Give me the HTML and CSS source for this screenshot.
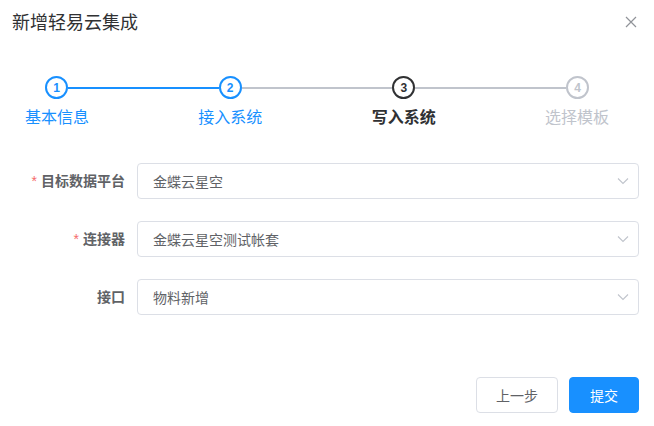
FILE: index.html
```html
<!DOCTYPE html>
<html lang="zh-CN">
<head>
<meta charset="utf-8">
<title>新增轻易云集成</title>
<link rel="stylesheet" href="styles.css">
</head>
<body>
<div class="dialog">
  <div class="header">
    <span class="title">新增轻易云集成</span>
    <svg class="close" width="12" height="12" viewBox="0 0 12 12"><path d="M1 1 L11 11 M11 1 L1 11" stroke="#909399" stroke-width="1.2" fill="none"/></svg>
  </div>

  <div class="steps">
    <div class="steps-head">
      <span class="circle done">1</span>
      <span class="line done"></span>
      <span class="circle done">2</span>
      <span class="line"></span>
      <span class="circle process">3</span>
      <span class="line"></span>
      <span class="circle wait">4</span>
    </div>
    <div class="steps-labels">
      <span class="label done">基本信息</span>
      <span class="label done">接入系统</span>
      <span class="label process">写入系统</span>
      <span class="label wait">选择模板</span>
    </div>
  </div>

  <div class="form">
    <div class="row">
      <label class="form-label"><span class="req">*</span>目标数据平台</label>
      <div class="select"><span>金蝶云星空</span><svg width="12" height="8" viewBox="0 0 12 8"><path d="M1 1.5 L6 6.5 L11 1.5" stroke="#c0c4cc" stroke-width="1.1" fill="none"/></svg></div>
    </div>
    <div class="row">
      <label class="form-label"><span class="req">*</span>连接器</label>
      <div class="select"><span>金蝶云星空测试帐套</span><svg width="12" height="8" viewBox="0 0 12 8"><path d="M1 1.5 L6 6.5 L11 1.5" stroke="#c0c4cc" stroke-width="1.1" fill="none"/></svg></div>
    </div>
    <div class="row">
      <label class="form-label">接口</label>
      <div class="select"><span>物料新增</span><svg width="12" height="8" viewBox="0 0 12 8"><path d="M1 1.5 L6 6.5 L11 1.5" stroke="#c0c4cc" stroke-width="1.1" fill="none"/></svg></div>
    </div>
  </div>

  <div class="footer">
    <button class="btn">上一步</button>
    <button class="btn primary">提交</button>
  </div>
</div>
</body>
</html>
```
FILE: styles.css
```css
html, body {
  margin: 0;
  padding: 0;
  background: #fff;
}
body {
  font-family: "Liberation Sans", "Noto Sans CJK SC", sans-serif;
  color: #606266;
}
.dialog {
  width: 654px;
  height: 426px;
  box-sizing: border-box;
}
.header {
  display: flex;
  justify-content: space-between;
  align-items: center;
  padding: 11px 17px 0 12px;
  height: 35px;
  box-sizing: border-box;
}
.title {
  font-size: 18px;
  line-height: 24px;
  color: #303133;
}
.close {
  display: block;
  margin-top: -3px;
}
.steps {
  margin-top: 41px;
}
.steps-head {
  display: flex;
  align-items: center;
  padding: 0 65px 0 45px;
}
.circle {
  width: 23px;
  height: 23px;
  box-sizing: border-box;
  border: 2px solid #c0c4cc;
  border-radius: 50%;
  display: flex;
  align-items: center;
  justify-content: center;
  font-size: 12px;
  font-weight: bold;
  color: #c0c4cc;
  flex: none;
}
.circle.done {
  border-color: #1890ff;
  color: #1890ff;
}
.circle.process {
  border-color: #303133;
  color: #303133;
}
.line {
  flex: 1;
  height: 2px;
  background: #c0c4cc;
}
.line.done {
  background: #1890ff;
}
.steps-labels {
  display: flex;
  justify-content: space-between;
  padding: 0 37px 0 17px;
  margin-top: 7px;
}
.label {
  width: 80px;
  text-align: center;
  font-size: 16px;
  line-height: 24px;
  color: #c0c4cc;
}
.label.done {
  color: #1890ff;
}
.label.process {
  color: #303133;
  font-weight: bold;
}
.form {
  margin-top: 33px;
  display: flex;
  flex-direction: column;
  gap: 22px;
  padding-right: 15px;
}
.row {
  display: flex;
  height: 36px;
}
.form-label {
  width: 137px;
  box-sizing: border-box;
  padding-right: 12px;
  text-align: right;
  font-size: 14px;
  font-weight: bold;
  line-height: 36px;
  color: #606266;
  flex: none;
}
.req {
  color: #f56c6c;
  font-weight: normal;
  margin-right: 4px;
}
.select {
  flex: 1;
  border: 1px solid #dcdfe6;
  border-radius: 4px;
  display: flex;
  align-items: center;
  justify-content: space-between;
  padding: 0 9px 0 15px;
  font-size: 14px;
  color: #606266;
}
.footer {
  display: flex;
  justify-content: flex-end;
  gap: 11px;
  padding-right: 15px;
  margin-top: 62px;
}
.btn {
  height: 36px;
  box-sizing: border-box;
  border: 1px solid #dcdfe6;
  border-radius: 4px;
  background: #fff;
  color: #606266;
  font-family: inherit;
  font-size: 14px;
  width: 82px;
  padding: 0;
}
.btn.primary {
  width: 70px;
  background: #1890ff;
  border-color: #1890ff;
  color: #fff;
}
```
